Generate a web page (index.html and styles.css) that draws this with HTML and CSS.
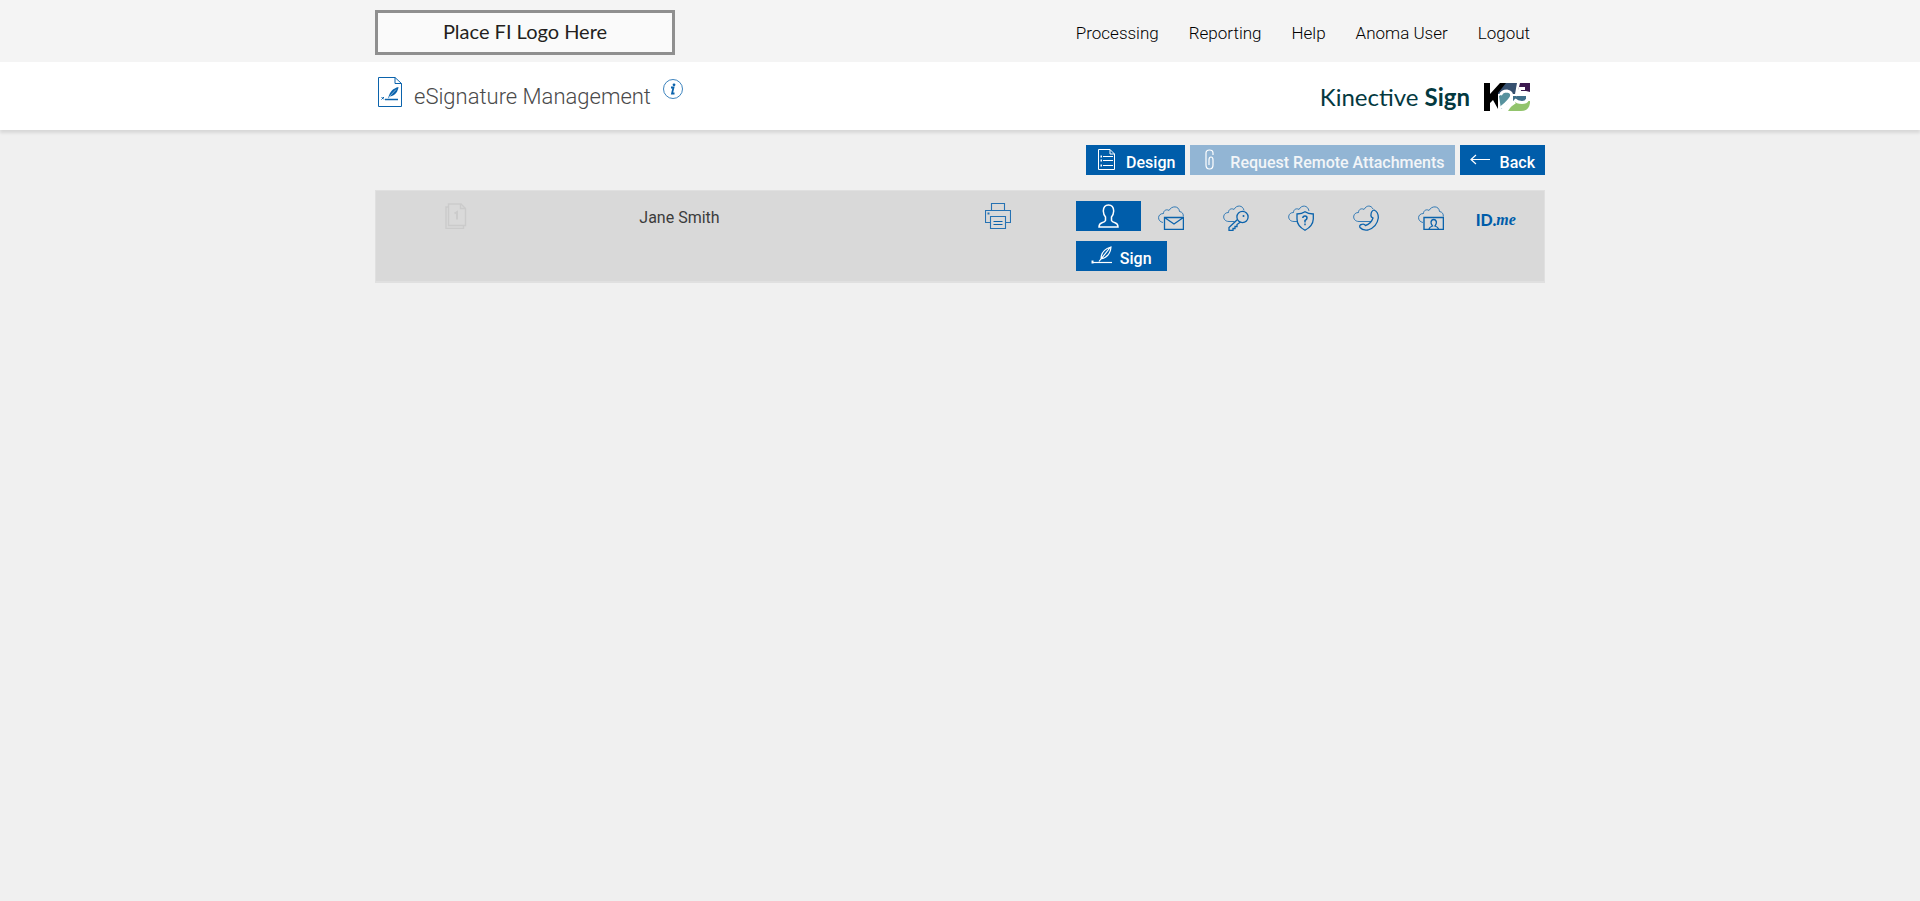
FILE: index.html
```html
<!DOCTYPE html>
<html lang="en">
<head>
<meta charset="utf-8">
<meta name="viewport" content="width=device-width, initial-scale=1">
<title>eSignature Management</title>
<link rel="stylesheet" href="styles.css">
</head>
<body>
<header>
  <div class="topbar">
    <div class="container topbar-inner">
      <div class="fi-logo">Place FI Logo Here</div>
      <nav class="nav">
        <a href="#">Processing</a>
        <a href="#">Reporting</a>
        <a href="#">Help</a>
        <a href="#">Anoma User</a>
        <a href="#">Logout</a>
      </nav>
    </div>
  </div>
  <div class="titlebar">
    <div class="container titlebar-inner">
      <div class="title-group">
        <svg class="title-icon" width="24" height="30" viewBox="0 0 24 30" fill="none" stroke="#0b63ac">
          <path d="M.5.5H17L23.500 6.500V29.500H.5Z"/>
          <path d="M17 .5V6.500H23.500"/>
          <path d="M7 22.500H20" stroke-width="1.500"/>
          <path d="M3.500 20l2.500 2.500M6 20l-2.500 2.500"/>
          <path d="M10 21.500C12 14 15 11.500 20.500 10 20 14 17.500 19 12 19.500Z" fill="#0b63ac" stroke="none"/>
          <path d="M11 20L18 12.500" stroke="#fff" stroke-width=".5"/>
        </svg>
        <h1>eSignature Management</h1>
        <button class="info" type="button" aria-label="Information">
          <svg width="20" height="20" viewBox="0 0 20 20" fill="none" stroke="#0b63ac">
            <circle cx="10" cy="10" r="9.500" stroke-width=".8"/>
            <circle cx="11" cy="5.800" r="1.400" fill="#0b63ac" stroke="none"/>
            <path d="M8 8.500H10.500L9 14.500H11.500" stroke-width="1.800"/>
          </svg>
        </button>
      </div>
      <div class="brand">
        <span class="brand-name">Kinective <b>Sign</b></span>
        <svg width="46" height="28" viewBox="0 0 46 28" role="img" aria-label="K25">
          <path d="M21 0H33L31 11H12Z" fill="#36506f"/>
          <path d="M36 0H46V9L42 8H34Z" fill="#3c1a50"/>
          <path d="M15 13L22 9H28V15L20 24 17 26Z" fill="#57929e"/>
          <path d="M29 13H42V18H29Z" fill="#3f6f89"/>
          <path d="M24 28L31 18H46V20Q45 28 37 28Z" fill="#92c46c"/>
          <path d="M0 0H6V11L16 0H22L14 10V26L9 17 6 20V28H0Z"/>
          <path d="M16.500 12Q18 8 23 8 28.500 9 27.500 13.500 26 17 18 24H24L31 19" fill="none" stroke="#fff" stroke-width="3"/>
          <path d="M41 5.500H36L34.500 10.500Q36.500 9.500 39.500 9.500 44 10 44 14.500 43.500 19.500 38 19.500 33 19.500 30.500 16.500" fill="none" stroke="#fff" stroke-width="3"/>
        </svg>
      </div>
    </div>
  </div>
</header>
<main class="container">
  <div class="toolbar">
    <button class="btn" type="button">
      <svg width="20" height="21" viewBox="-2 0 20 21" fill="none" stroke="#fff">
        <path d="M.5.5H12L16.500 5V20.500H.5Z"/>
        <path d="M12 .5V5H16.500M5 7.500H15M5 11.500H15M5 16.500H15"/>
        <path d="M2.500 7.500H4M2.500 11.500H4M2.500 16.500H4" stroke-width="2"/>
      </svg>
      <span>Design</span>
    </button>
    <button class="btn btn-attach" type="button" disabled>
      <svg width="20" height="21" viewBox="-5 0 20 21" fill="none" stroke="#fff" stroke-width="1.200">
        <path d="M8 6V4Q8 1 4.500 1T1 4V16Q1 20 4.500 20T8 16V11Q8 8 6 8T4 11V16"/>
      </svg>
      <span>Request Remote Attachments</span>
    </button>
    <button class="btn" type="button">
      <svg width="20" height="21" viewBox="0 0 20 21" fill="none" stroke="#fff" stroke-width="1.200">
        <path d="M1 10.500H20M6 6L1 10.500 6 15"/>
      </svg>
      <span>Back</span>
    </button>
  </div>
  <section class="signer">
    <div class="cell pages">
      <svg width="22" height="26" viewBox="0 0 22 26" fill="none" stroke="#cbcbcb" stroke-width="1.400">
        <path d="M3.500 1H16L20.500 5.500V22.500H3.500Z"/>
        <path d="M15.500 1V5.500H20.500M3.500 4H1V25.500H18.500V23"/>
        <path d="M9.500 10.500L12 9V16.500" stroke-width="2"/>
      </svg>
    </div>
    <div class="cell name">Jane Smith</div>
    <div class="cell print">
      <button class="plain" type="button" aria-label="Print">
        <svg width="26" height="26" viewBox="0 0 26 26" fill="none" stroke="#2672b3" stroke-width="1.100">
          <path d="M6.500 7V.5H19.500V7M5.500 19.500H.5V7.500H25.500V19.500H20.500"/>
          <path d="M5.500 13.500H20.500V25.500H5.500Z"/>
          <path d="M8.500 18.500H17.500M8.500 21.500H17.500" stroke="#0b63ac"/>
          <path d="M2.500 10.500H4.500" stroke-width="2"/>
        </svg>
      </button>
    </div>
    <div class="actions">
      <div class="methods">
        <button class="method active" type="button" aria-label="In person">
          <svg width="21" height="24" viewBox="0 0 21 24" fill="none" stroke="#fff" stroke-width="1.500">
            <path d="M7.500 16.500V13Q5.500 11 5.300 7 5.500 1 10.500 1T15.700 7Q15.500 11 13.500 13V16.500Q14 18 17 18.700 20 19.500 20 23H1Q1 19.500 4 18.700 7 18 7.500 16.500Z"/>
          </svg>
        </button>
        <button class="method" type="button" aria-label="Email">
          <svg width="26" height="26" viewBox="0 0 26 26" fill="none" stroke="#0b63ac" stroke-width="1.300">
            <path d="M5 17.500C-1 16.500-1 8.500 5.500 8.500 5.500 5 9 4 11 5.500 13.500.5 21 .5 21.500 6.500 24.500 7 25.500 9 25.300 11.500" stroke-width=".8"/>
            <path d="M6.500 12.500H25.400V24.400H6.500ZM6.500 12.500L16 19 25.400 12.500"/>
          </svg>
        </button>
        <button class="method" type="button" aria-label="Access code">
          <svg width="26" height="26" viewBox="0 0 26 26" fill="none" stroke="#0b63ac" stroke-width="1.300">
            <path d="M11.500 16.500H6C-1 16.500-1 7.500 5.500 7.500 5.500 4 9 3 11 4.500 13.500-.5 20 0 21 5.500" stroke-width=".8"/>
            <circle cx="19.500" cy="12" r="5.600"/>
            <path d="M14.500 14.500L6 22.500V25.300H10V23.500H12V21.500H14V19.500L17.500 17"/>
            <circle cx="20.500" cy="11" r="1" fill="#0b63ac" stroke="none"/>
          </svg>
        </button>
        <button class="method" type="button" aria-label="Security question">
          <svg width="26" height="26" viewBox="0 0 26 26" fill="none" stroke="#0b63ac" stroke-width="1.300">
            <path d="M9 16.500H6C-1 16.500-1 7.500 5.500 7.500 5.500 4 9 3 11 4.500 13.500-.5 20 0 21 6" stroke-width=".8"/>
            <path d="M9 9Q14 9 17 6.800 20 9 25.300 9V14Q25 21 17 25.300 9 21 9 14Z"/>
            <path d="M14.800 13Q15 11 17 11T19 13Q19 14.500 17 15.500V17.500M17 18.500V20.300" stroke-width="1.500"/>
          </svg>
        </button>
        <button class="method" type="button" aria-label="Phone">
          <svg width="26" height="26" viewBox="0 0 26 26" fill="none" stroke="#0b63ac" stroke-width="1.300">
            <path d="M18 16.500H6C-1 16.500-1 7.500 5.500 7.500 5.500 4 9 3 11 4.500 13.500 0 18 0 20 4" stroke-width=".8"/>
            <path d="M21 5Q25.500 7 25.300 13 24 22 15 25 10 26 7 22.500 6 20 8.500 19.500 11 18.500 12.500 20.500 18 19 20 13 17.500 12 18 10 18 6 21 5Z"/>
          </svg>
        </button>
        <button class="method" type="button" aria-label="Video">
          <svg width="26" height="26" viewBox="0 0 26 26" fill="none" stroke="#0b63ac" stroke-width="1.300">
            <path d="M5 17.500C-1 16.500-1 8.500 5.500 8.500 5.500 5 9 4 11 5.500 13.500.5 21 .5 21.500 6.500 24.500 7 25.500 9 25.300 11.500" stroke-width=".8"/>
            <path d="M6 12.500H25.400V24.400H6Z" stroke-width="1.400"/>
            <path d="M11 24Q11.500 22 14.500 21 12.800 19 13 17 13.500 14.500 15.700 14.500T18.400 17Q18.500 19 17 21 20 22 20.500 24"/>
          </svg>
        </button>
        <button class="method idme" type="button"><b>ID.</b><i>me</i></button>
      </div>
      <button class="btn btn-sign" type="button">
        <svg width="21" height="21" viewBox="0 0 21 21" fill="none" stroke="#fff" stroke-width="1.200">
          <path d="M2 17.500H21"/>
          <path d="M.5 15.500h2v3h-2Z" fill="#fff" stroke="none"/>
          <path d="M8 16.500L19.500 2M10 14C10 8 13 4 20 2 19.500 7.500 16.500 12.500 10 14Z"/>
        </svg>
        <span>Sign</span>
      </button>
    </div>
  </section>
</main>
</body>
</html>
```
FILE: styles.css
```css
* {
  box-sizing: border-box;
}

body {
  margin: 0;
  background: #f0f0f0;
  color: #3c3c3c;
  font-family: Roboto, sans-serif;
  font-size: 16px;
  line-height: 20px;
}

button {
  margin: 0;
  padding: 0;
  border: 0;
  background: none;
  color: inherit;
  font: inherit;
  cursor: pointer;
}

svg {
  display: block;
  flex: none;
}

.container {
  width: 100%;
  max-width: 1170px;
  margin: 0 auto;
}

.topbar {
  background: #f4f4f4;
}

.topbar-inner {
  display: flex;
  align-items: center;
  justify-content: space-between;
  padding: 10px 0 7px;
}

.fi-logo {
  flex: 0 1 300px;
  padding: 8px 0 11px;
  border: 3px solid #8f8f8f;
  background: #fafafa;
  color: #231f20;
  font-family: Lato, sans-serif;
  font-size: 20px;
  text-align: center;
}

.nav {
  display: flex;
}

.nav a {
  padding: 0 15px;
  color: #000;
  font-size: 17px;
  font-weight: 300;
  text-decoration: none;
}

.titlebar {
  background: #fff;
  box-shadow: 0 3px 3px rgba(0, 0, 0, 0.1);
}

.titlebar-inner {
  display: flex;
  align-items: center;
  justify-content: space-between;
  min-height: 68px;
  padding: 0 15px 0 3px;
}

.title-group {
  display: flex;
  align-items: flex-start;
}

h1 {
  margin: 4px 12px 0;
  color: #4a4a4a;
  font-size: 22px;
  font-weight: 300;
  line-height: 32px;
}

.title-icon {
  margin-bottom: 8px;
}

.info {
  margin-top: 2px;
}

.brand {
  display: flex;
  align-items: center;
  gap: 14px;
  padding-top: 2px;
}

.brand-name {
  color: #04393f;
  font-family: Lato, sans-serif;
  font-size: 24px;
  line-height: 28px;
}

.toolbar {
  display: flex;
  justify-content: flex-end;
  gap: 5px;
  padding: 15px 0;
}

.btn {
  display: inline-flex;
  align-items: center;
  gap: 10px;
  height: 30px;
  padding: 0 10px;
  background: #005daa;
  color: #fff;
  font-size: 16px;
  font-weight: 500;
}

.btn svg {
  margin-bottom: 2px;
}

.btn span {
  margin-top: 6px;
}

.btn-attach {
  background: #92b5d4;
  color: #f2f5f8;
  cursor: default;
}

.signer {
  display: grid;
  grid-template-columns: 160fr 288fr 97fr 156fr 469fr;
  padding: 10px 0;
  border: 1px solid #e0e0e0;
  border-bottom-width: 2px;
  background: #d9d9d9;
}

.cell {
  display: flex;
  align-items: flex-start;
  justify-content: center;
}

.pages,
.print {
  padding-top: 2px;
}

.name {
  padding-top: 7px;
}

.print {
  grid-column: 4;
}

.actions {
  grid-column: 5;
}

.methods {
  display: flex;
  margin-bottom: 10px;
}

.method {
  display: flex;
  align-items: center;
  justify-content: center;
  width: 65px;
  height: 30px;
  padding: 3px 5px 0 0;
}

.method.active {
  padding: 0;
  background: #005daa;
}

.idme {
  padding-top: 8px;
  color: #005daa;
  font-family: Lato, sans-serif;
  font-size: 16px;
}

.idme b {
  font-weight: 900;
}

.idme i {
  font-family: "Liberation Serif", serif;
  font-weight: 700;
}

.btn-sign {
  gap: 8px;
  padding: 0 15px;
}
```
